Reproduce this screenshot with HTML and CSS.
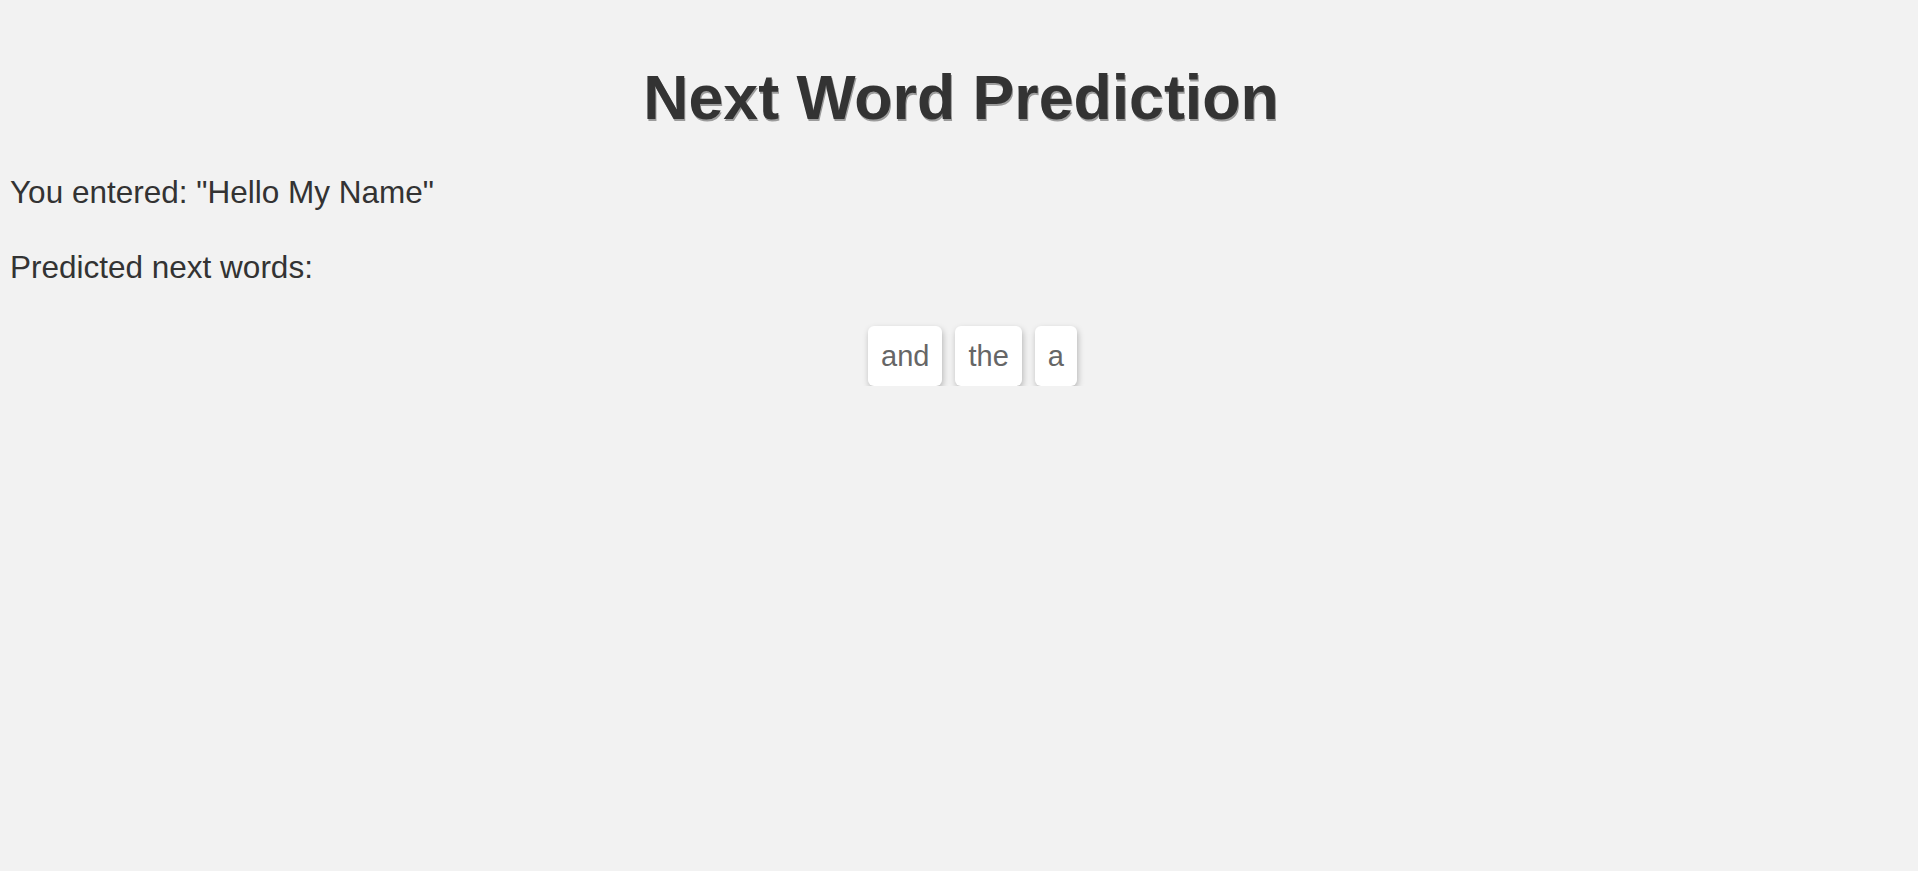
FILE: index.html
```html
<!DOCTYPE html>
<html lang="en">
<head>
<meta charset="utf-8">
<title>Next Word Prediction</title>
<link rel="stylesheet" href="styles.css">
</head>
<body>
  <h1 class="title">Next Word Prediction</h1>
  <p class="info info-first">You entered: "Hello My Name"</p>
  <p class="info">Predicted next words:</p>
  <div class="predictions">
    <span class="word">and</span>
    <span class="word">the</span>
    <span class="word">a</span>
  </div>
</body>
</html>
```

FILE: styles.css
```css
html, body {
  background: #f2f2f2;
}
body {
  margin: 0;
  padding: 0 10px;
  font-family: "Liberation Sans", Arial, sans-serif;
  color: #333333;
}
.title {
  margin: 61px 0 0;
  padding-left: 4px;
  font-size: 62.6px;
  line-height: 72px;
  font-weight: bold;
  text-align: center;
  color: #333333;
  text-shadow: 1px 2px 0 rgba(51, 51, 51, 0.45);
}
.info {
  margin: 32px 0;
  font-size: 31.5px;
  line-height: 43px;
}
.info-first {
  margin-top: 38px;
}
.predictions {
  display: flex;
  justify-content: center;
  gap: 13px;
  padding-left: 27px;
  margin-top: 37px;
}
.word {
  display: block;
  background: #ffffff;
  color: #666666;
  font-size: 29px;
  line-height: 34px;
  padding: 13px 13px;
  border-radius: 6px;
  box-shadow: 1px 3px 6px rgba(0, 0, 0, 0.25);
}
```
